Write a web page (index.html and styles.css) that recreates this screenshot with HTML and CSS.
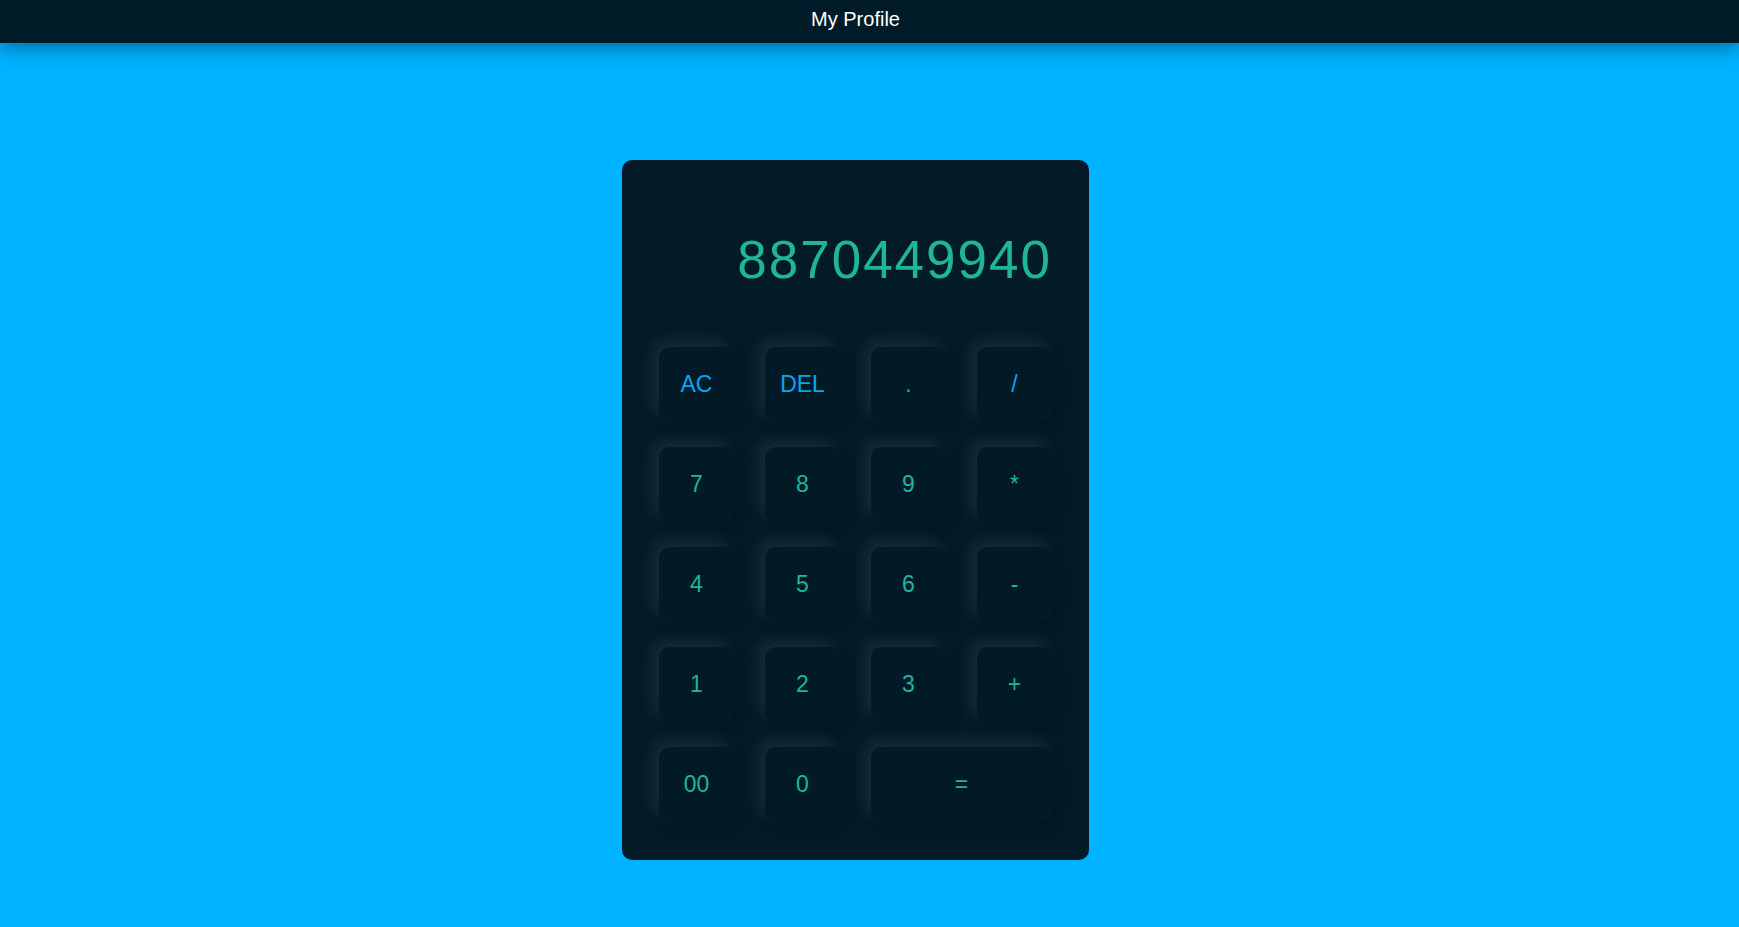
FILE: index.html
```html
<!DOCTYPE html>
<html lang="en">
<head>
<meta charset="utf-8">
<title>Calculator</title>
<link rel="stylesheet" href="styles.css">
</head>
<body>
<header class="navbar"><h1 class="navbar-title">My Profile</h1></header>
<main class="page">
  <section class="calculator">
    <div class="display"><span class="display-value">8870449940</span></div>
    <div class="keys">
      <button class="key key-fn">AC</button>
      <button class="key key-fn">DEL</button>
      <button class="key key-fn">.</button>
      <button class="key key-fn">/</button>
      <button class="key">7</button>
      <button class="key">8</button>
      <button class="key">9</button>
      <button class="key">*</button>
      <button class="key">4</button>
      <button class="key">5</button>
      <button class="key">6</button>
      <button class="key">-</button>
      <button class="key">1</button>
      <button class="key">2</button>
      <button class="key">3</button>
      <button class="key">+</button>
      <button class="key">00</button>
      <button class="key">0</button>
      <button class="key key-wide">=</button>
    </div>
  </section>
</main>
</body>
</html>
```
FILE: styles.css
```css
* { box-sizing: border-box; }
html, body { margin: 0; padding: 0; }
body {
  background: #00b2ff;
  font-family: "Liberation Sans", Arial, sans-serif;
  min-height: 927px;
}
.navbar {
  height: 43px;
  background: #021b28;
  display: flex;
  align-items: flex-start;
  justify-content: center;
  padding-right: 28px;
  padding-top: 8px;
  box-shadow: 0 6px 18px rgba(0, 0, 0, 0.35);
  position: relative;
}
.navbar-title {
  margin: 0;
  font-size: 20px;
  font-weight: normal;
  color: #ffffff;
  line-height: 23px;
}
.page {
  display: flex;
  justify-content: center;
  padding-top: 117px;
  padding-right: 28px;
}
.calculator {
  width: 467px;
  height: 700px;
  background: #021b27;
  border-radius: 10px;
  padding: 37px 37px 38px;
}
.display {
  height: 125px;
  margin-bottom: 25px;
  padding-top: 36px;
  text-align: right;
}
.display-value {
  display: block;
  font-size: 53px;
  line-height: 53px;
  letter-spacing: 2px;
  color: #1fb59b;
}
.keys {
  display: grid;
  grid-template-columns: repeat(4, 75px);
  grid-auto-rows: 75px;
  column-gap: 31px;
  row-gap: 25px;
}
.key {
  border: none;
  border-radius: 11px;
  background: #021a26;
  color: #1fb59b;
  font-family: "Liberation Sans", Arial, sans-serif;
  font-size: 23px;
  padding: 0;
  box-shadow: -6px -6px 16px rgba(255, 255, 255, 0.09), 5px 5px 14px rgba(0, 0, 0, 0.22);
}
.key-fn { color: #04a8f0; }
.key-wide { grid-column: span 2; }
```
